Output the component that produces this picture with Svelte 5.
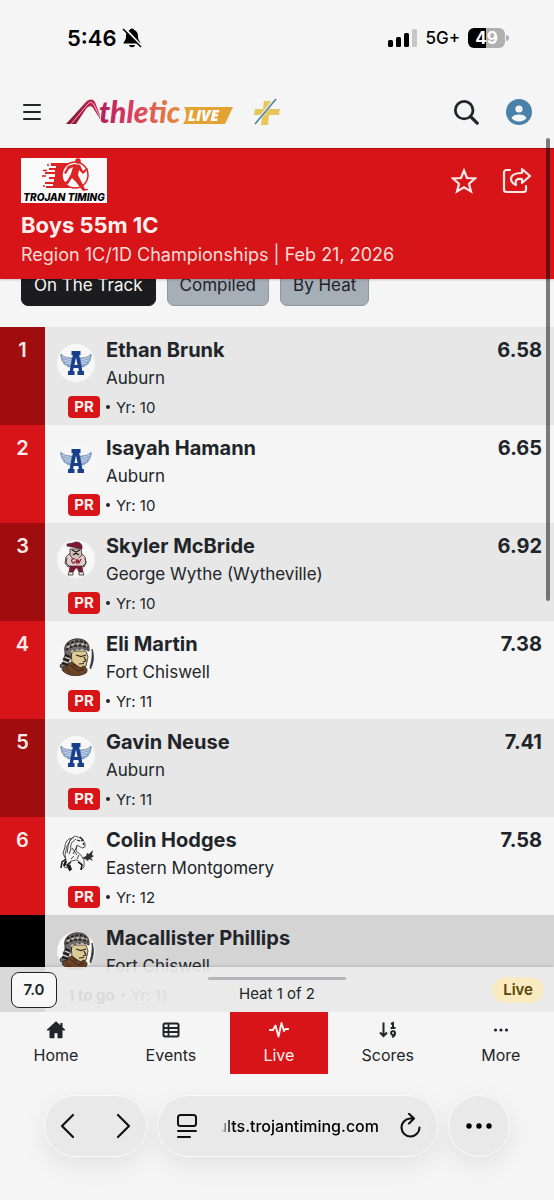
<script lang="ts">
	type School = 'auburn' | 'wythe' | 'chiswell' | 'montgomery';

	interface Result {
		place?: number;
		name: string;
		team: string;
		school: School;
		year: number;
		time?: string;
		note?: string;
	}

	const results: Result[] = [
		{ place: 1, name: 'Ethan Brunk', team: 'Auburn', school: 'auburn', year: 10, time: '6.58' },
		{ place: 2, name: 'Isayah Hamann', team: 'Auburn', school: 'auburn', year: 10, time: '6.65' },
		{ place: 3, name: 'Skyler McBride', team: 'George Wythe (Wytheville)', school: 'wythe', year: 10, time: '6.92' },
		{ place: 4, name: 'Eli Martin', team: 'Fort Chiswell', school: 'chiswell', year: 11, time: '7.38' },
		{ place: 5, name: 'Gavin Neuse', team: 'Auburn', school: 'auburn', year: 11, time: '7.41' },
		{ place: 6, name: 'Colin Hodges', team: 'Eastern Montgomery', school: 'montgomery', year: 12, time: '7.58' },
		{ name: 'Macallister Phillips', team: 'Fort Chiswell', school: 'chiswell', year: 11, note: '1 to go' }
	];

	const tabs = ['On The Track', 'Compiled', 'By Heat'];
	const pages = ['Home', 'Events', 'Live', 'Scores', 'More'];

	let activeTab = $state('On The Track');
	let activePage = $state('Live');
</script>

{#snippet schoolLogo(school: School)}
	<svg class="school" viewBox="0 0 38 38" aria-hidden="true">
		<circle cx="19" cy="19" r="19" fill="#f7f7f7" />
		{#if school === 'auburn'}
			<g fill="#8fa9cc" stroke="#4a6c9f" stroke-width="0.6">
				<path d="M4 10c2 3 6 4 11 4l-1 9c-3 0-4-1-4.500-2-2 0-3-1.500-3-3-1.500-.8-2-2-1.600-3C4 14 3.500 12 4 10z" />
				<path d="M34 10c-2 3-6 4-11 4l1 9c3 0 4-1 4.500-2 2 0 3-1.500 3-3 1.500-.8 2-2 1.600-3 .9-1 1.400-3 .9-5z" />
				<path d="M5 13l9 3M6 16l8 2M8 19l6 1M33 13l-9 3M32 16l-8 2M30 19l-6 1" fill="none" stroke="#e8eef6" />
			</g>
			<path fill="#173f8a" fill-rule="evenodd" d="M14.500 7h9v4h-1.300l3.200 16H27v4h-6.500v-4H22l-.6-3h-4.800L16 27h1.500v4H11v-4h1.600l3.200-16h-1.300zM19 13.500L17.400 21h3.200z" />
		{:else if school === 'wythe'}
			<path d="M12 14l-3 3-1 6 3 4 2-1h11l3 1 2-4-1-6-3-3z" fill="#dccfc9" stroke="#39272a" stroke-width="0.8" />
			<path d="M13 9h11l1 6-4 4h-5l-3-4z" fill="#d8c3bb" stroke="#33252a" stroke-width="0.8" />
			<path d="M10 4l6-1c3-2 8-1 9 3v3l-10-2-5-1z" fill="#7e1830" stroke="#34151d" stroke-width="0.6" />
			<path d="M15 10l4 2 4-2M16 15c2-2 4-2 6 0" fill="none" stroke="#222" stroke-width="1.300" />
			<path d="M14 18h10v8H14z" fill="#ddd1cf" />
			<path d="M18 19c-3-1-4 1-3 3s3 1 3 0v-1m1-2 1 4 1-3 1 3 2-4" fill="none" stroke="#8b1832" stroke-width="1.200" />
			<path d="M13 26h12l1 6h-4l-2-4h-1l-3 4h-4z" fill="#7e1830" stroke="#401520" stroke-width="0.5" />
			<path d="M12 32h4v3h-5zM22 32h4l1 3h-5z" fill="#eee" stroke="#332b2c" stroke-width="0.800" />
			<path d="M10 18l-1 5 3 3M28 18l1 5-3 3" fill="none" stroke="#55383b" />
		{:else if school === 'chiswell'}
			<path d="M14 13h15l2 6-2 9-5 2-9-5z" fill="#dcca96" stroke="#3c2f1f" stroke-width="0.8" />
			<path d="M5 32c2-5 6-7 10-8l8 6 4-2c3 2 4 4 2 7-7 4-18 4-24-3z" fill="#6b4325" stroke="#2f2219" stroke-width="0.8" />
			<path d="M8 14C6 7 12 1 20 .8c8 0 13 4 12 12.200-6-2.500-12-2-17 1l-1 6-3 4-1 4-6 2-1-3 4-3-1-3 2-3z" fill="#6f6c69" stroke="#1f1d1c" stroke-width="0.8" />
			<path d="M9 12c6-5 14-6 22-2M10 7c6-4 13-5 19-2" fill="none" stroke="#262422" stroke-width="2" stroke-dasharray="3 1.500" />
			<path d="M10 9.500c6-4 13-5 20-2M14 14c5-3 11-3 16-1" fill="none" stroke="#c9c6c1" stroke-width="1.500" stroke-dasharray="3 2" />
			<path d="M8 17l5 2M7 21l5 2M5 25l6 2" stroke="#1d1b1a" stroke-width="2" fill="none" />
			<path d="M8 19l5 2M6 23l5 2" stroke="#cfccc6" stroke-width="1.200" fill="none" />
			<path d="M19 17l5 1.500 5-1.500M27 19l2 4-3 1M22 26l5-.5" fill="none" stroke="#33291b" stroke-width="1.200" />
			<path d="M13 27l8 6 6-2M9 30l4 5M16 26l3 3" stroke="#3b2718" fill="none" />
			<path d="M35 11c2.500 7 1.500 14-1.500 20l-.5-2c2-6 2.500-12 2-18z" fill="#343638" stroke="#343638" stroke-width="0.8" />
		{:else}
			<path d="M14 5l4-3 6 2 4 5v4l-3 1-5-3-1 6 5 4 3 5v7l-3 3 1-6-5-4-6 1-4 7-3-1 2-6-1-7 2-8z" fill="#f4f4f4" stroke="#333" stroke-width="0.8" />
			<path d="M14 4c-5 2-6 6-6 9l-2 6 2 5M17 3c-5 3-5 6-6 10l-1 6M19 5c-4 3-6 5-5 10l-2 5M15 14l5 7M20 12l-4 8M17 22l-3 3M22 21l-2 4" fill="none" stroke="#333" stroke-width="0.9" />
			<path d="M20 6l3 1M26 9l1 2M23 3l3 3-2 1" fill="none" stroke="#181818" stroke-width="1.300" />
			<path d="M9 25l-4 3-1 6M14 28l-4 3 3 6M21 28l4 3-1 5" fill="none" stroke="#181818" stroke-width="1.500" />
			<path d="M12 31l2 5M9 27l-2 5" fill="none" stroke="#181818" stroke-width="2.400" />
			<path d="M25 24l4-2 1-3 2 1 4-4-1 5 2 1-3 2 2 3-4-2-1 2-3-2z" fill="#303030" />
		{/if}
	</svg>
{/snippet}

{#snippet navIcon(name: string)}
	<svg class="nav-icon" viewBox="0 0 20 20" aria-hidden="true">
		{#if name === 'Home'}
			<path d="M10 1.200.8 9.800l1.200 1.200 1.500-1.200v7.500c0 .6.400 1 1 1h4v-5h3v5h4c.6 0 1-.4 1-1V9.800L18 11l1.200-1.200-2.700-2.500V3h-2.200v2.200z" fill="currentColor" />
		{:else if name === 'Events'}
			<rect x="2.500" y="3.500" width="15" height="13" rx="1.500" fill="none" stroke="currentColor" stroke-width="2" />
			<path d="M7.500 4v12M3 8h14M3 12h14" fill="none" stroke="currentColor" stroke-width="1.800" />
		{:else if name === 'Live'}
			<path d="M0 10h4l2.500-4.500 3 11L12.500 3l2.500 8 1.500-2H20" fill="none" stroke="currentColor" stroke-width="1.900" stroke-linejoin="round" />
		{:else if name === 'Scores'}
			<path d="M5.500 2.500v13M2 12.500l3.500 3.500L9 12.500M13 4l2-1v5M12.500 8h5M15 11a2 2 0 1 0 .1 0M17 13c0 2-.8 3.500-3 4" fill="none" stroke="currentColor" stroke-width="2" />
		{:else}
			<g fill="currentColor"><circle cx="4.500" cy="10" r="1.600" /><circle cx="10" cy="10" r="1.600" /><circle cx="15.500" cy="10" r="1.600" /></g>
		{/if}
	</svg>
{/snippet}

<div class="screen">
	<div class="status-bar">
		<div class="clock">
			<span>5:46</span>
			<svg width="20" height="22" viewBox="0 0 20 22" aria-hidden="true">
				<path d="M10 1.500c-1.500 0-2 .8-2.200 1.500C5 4 4 6.500 4 9.500c0 4-2.500 5-2.500 7h17c0-2-2.500-3-2.500-7 0-3-1-5.500-3.800-6.500-.2-.7-.7-1.500-2.200-1.500zM7 18c.5 3 5.500 3 6 0z" fill="#000" />
				<path d="M2.500 1l17 18" stroke="#f5f5f5" stroke-width="2" />
				<path d="M1 2l18 18" stroke="#000" stroke-width="1.600" />
			</svg>
		</div>
		<div class="signal">
			<svg width="29" height="20" viewBox="0 0 29 20" aria-hidden="true">
				<rect x="0" y="12" width="5" height="7" rx="1.500" />
				<rect x="8" y="9" width="5" height="10" rx="1.500" />
				<rect x="16" y="5" width="5" height="14" rx="1.500" />
				<rect x="24" y="1" width="5" height="18" rx="1.500" fill="#c7c7c7" />
			</svg>
			<span class="network">5G+</span>
			<span class="battery">49</span>
		</div>
	</div>

	<header class="app-bar">
		<button type="button" class="icon-button" aria-label="Menu">
			<svg width="20" height="20" viewBox="0 0 20 20">
				<path d="M2 3h16M2 10h16M2 17h16" stroke="#212529" stroke-width="2" stroke-linecap="round" />
			</svg>
		</button>
		<a class="brand" href="#home" aria-label="AthleticLIVE">
			<svg width="168" height="34" viewBox="0 0 168 34">
				<defs>
					<linearGradient id="brand-fill" gradientUnits="userSpaceOnUse" x1="34" y1="0" x2="124" y2="0">
						<stop offset="0" stop-color="#b3205c" />
						<stop offset="0.35" stop-color="#d93b62" />
						<stop offset="0.65" stop-color="#df694d" />
						<stop offset="1" stop-color="#e3a238" />
					</linearGradient>
					<linearGradient id="brand-peak">
						<stop offset="0" stop-color="#8a1528" />
						<stop offset="1" stop-color="#c32a62" />
					</linearGradient>
				</defs>
				<path d="M0 29 19 8c3-4 8-5 10-1l5 13v4l-7-11c-2-3-5-2-7 1L10 29z" fill="url(#brand-peak)" />
				<path d="M5 29 21 10c3-4 5-3 7 0l6 12" fill="none" stroke="#f7d9df" stroke-width="0.800" />
				<path d="M118 12h49l-8 17h-42c4-5 4-12 1-17z" fill="#e2a332" />
				<text x="33" y="28" class="brand-name" fill="url(#brand-fill)">thletic</text>
				<text x="122" y="26" class="brand-live">LIVE</text>
			</svg>
		</a>
		<svg class="plus" width="26" height="28" viewBox="0 0 26 28" aria-hidden="true">
			<path d="M10 3h7l-1 8h10l-1 6H15l-1 10H7l1-10H0l1-6h8z" fill="#e9c55c" />
			<path d="M22 0 1 26" stroke="#f5f5f5" stroke-width="3" />
			<path d="M22 1 1 26" stroke="#4c86a3" stroke-width="1.700" />
		</svg>
		<div class="app-actions">
			<button type="button" class="icon-button" aria-label="Search">
				<svg width="26" height="26" viewBox="0 0 28 28">
					<circle cx="12" cy="12" r="9.500" fill="none" stroke="#212529" stroke-width="3" />
					<path d="M19 19l7 7" stroke="#212529" stroke-width="3.500" stroke-linecap="round" />
				</svg>
			</button>
			<button type="button" class="icon-button" aria-label="Account">
				<svg width="26" height="26" viewBox="0 0 26 26">
					<circle cx="13" cy="13" r="13" fill="#4981ab" />
					<circle cx="13" cy="10" r="3.600" fill="#f5f5f5" />
					<path d="M5.500 19c1-2.500 4-3.500 7.500-3.500s6.500 1 7.500 3.500c-3 4.500-12 4.500-15 0z" fill="#f5f5f5" />
				</svg>
			</button>
		</div>
	</header>

	<section class="meet">
		<div class="meet-top">
			<svg width="86" height="45" viewBox="0 0 86 45" role="img" aria-label="Trojan Timing">
				<rect width="86" height="45" fill="#fafafa" />
				<path d="M30 5h20l-6 5-2 7 3 8 5 5H25v-2h7v-2h-8v-2h9v-3h-5v-2h6v-3H24v-2h10v-2h-6v-2h7V8h-5z" fill="#dc2427" />
				<path d="M22 12.500h4M21 18h4M26 7h2M22 28h2" stroke="#dc2427" stroke-width="1.500" />
				<circle cx="54" cy="17" r="13" fill="#fafafa" stroke="#dc2427" stroke-width="1.500" />
				<circle cx="57" cy="3" r="2.800" fill="#dc2427" />
				<path d="M53 6l6 1 3 6 4-3 1 1-5 5-4-4-1 5 3 6 4 8h3v1l-5 1-7-9-4-4-4 6-6 1v-2l5-2 4-7 2-7-4 2-3 5-2-1 4-7z" fill="#dc2427" />
				<text x="43" y="43" class="timing-name" text-anchor="middle">TROJAN TIMING</text>
			</svg>
			<div class="meet-actions">
				<button type="button" class="icon-button" aria-label="Favorite">
					<svg width="26" height="26" viewBox="0 0 26 26">
						<path d="M13 2.500l3 7.500 8 .5-6 5.300 2 7.700-7-4.200-7 4.200 2-7.700L2 10.500l8-.5z" fill="none" stroke="#fde8e8" stroke-width="2.200" stroke-linejoin="miter" />
					</svg>
				</button>
				<button type="button" class="icon-button" aria-label="Share">
					<svg width="30" height="28" viewBox="0 0 30 28" fill="none" stroke="#fde8e8" stroke-width="2.200" stroke-linejoin="round" stroke-linecap="round">
						<path d="M8 3H4.500C3 3 2 4 2 5.500v17C2 24 3 25 4.500 25h17c1.500 0 2.500-1 2.500-2.500V19" />
						<path d="M20 2l8 7-8 7v-4c-6-.5-7 1-6 6-4-2-5-4-5-6 0-4 4-6 11-6z" />
					</svg>
				</button>
			</div>
		</div>
		<h1>Boys 55m 1C</h1>
		<p>Region 1C/1D Championships | Feb 21, 2026</p>
	</section>

	<main>
		<div class="tabs">
			{#each tabs as tab}
				<button type="button" class="tab" class:active={tab === activeTab} onclick={() => (activeTab = tab)}>{tab}</button>
			{/each}
		</div>

		<ol class="results">
			{#each results as result}
				<li class="result" class:pending={!result.place}>
					<span class="place">{result.place ?? ''}</span>
					<div class="entry">
						<div class="athlete">
							{@render schoolLogo(result.school)}
							<div class="names">
								<strong class="name">{result.name}</strong>
								<span class="team">{result.team}</span>
							</div>
							{#if result.time}
								<span class="time">{result.time}</span>
							{/if}
						</div>
						<div class="meta">
							{#if result.note}
								<b class="note">{result.note}</b>
							{:else}
								<span class="pr">PR</span>
							{/if}
							<span class="dot"></span>
							<span>Yr: {result.year}</span>
						</div>
					</div>
				</li>
			{/each}
		</ol>
	</main>

	<div class="live-bar">
		<button type="button" class="timer">7.0</button>
		<div class="heat">
			<span class="handle"></span>
			<span>Heat 1 of 2</span>
		</div>
		<span class="live-badge">Live</span>
	</div>

	<nav class="bottom-nav">
		{#each pages as page}
			<a href="#{page.toLowerCase()}" class:active={page === activePage} onclick={() => (activePage = page)}>
				{@render navIcon(page)}
				<span>{page}</span>
			</a>
		{/each}
	</nav>

	<footer class="browser-bar">
		<div class="pill history">
			<button type="button" class="icon-button" aria-label="Back">
				<svg width="16" height="26" viewBox="0 0 16 26"><path d="M13 2 2 13l11 11" fill="none" stroke="#111" stroke-width="2.200" stroke-linecap="round" stroke-linejoin="round" /></svg>
			</button>
			<button type="button" class="icon-button" aria-label="Forward">
				<svg width="16" height="26" viewBox="0 0 16 26"><path d="M3 2l11 11L3 24" fill="none" stroke="#111" stroke-width="2.200" stroke-linecap="round" stroke-linejoin="round" /></svg>
			</button>
		</div>
		<div class="pill address">
			<button type="button" class="icon-button" aria-label="Page menu">
				<svg width="22" height="26" viewBox="0 0 22 26" fill="none" stroke="#111" stroke-width="2" stroke-linecap="round">
					<rect x="2" y="2" width="18" height="11" rx="2.500" /><path d="M2 18h18M2 24h12" />
				</svg>
			</button>
			<button type="button" class="url">ults.trojantiming.com</button>
			<button type="button" class="icon-button" aria-label="Reload">
				<svg width="22" height="26" viewBox="0 0 22 26" fill="none" stroke="#111" stroke-width="2.100" stroke-linecap="round" stroke-linejoin="round">
					<path d="M14 5.500H11a9 9 0 1 0 9.500 9M10 .8l5 4.700-5 5" />
				</svg>
			</button>
		</div>
		<button type="button" class="pill more" aria-label="More options">
			<svg width="26" height="6" viewBox="0 0 26 6"><circle cx="3" cy="3" r="2.700" /><circle cx="13" cy="3" r="2.700" /><circle cx="23" cy="3" r="2.700" /></svg>
		</button>
	</footer>

	<span class="scroll-thumb"></span>
</div>

<style>
	:global(body) {
		margin: 0;
		background: #f5f5f5;
	}

	.screen {
		position: relative;
		font-family: Inter, 'Liberation Sans', sans-serif;
		color: #212529;
		background: #f5f5f5;
	}

	svg {
		display: block;
		flex: none;
	}

	button {
		font: inherit;
		color: inherit;
		cursor: pointer;
	}

	.icon-button {
		padding: 0;
		border: 0;
		background: none;
	}

	.status-bar {
		display: flex;
		justify-content: space-between;
		align-items: center;
		height: 76px;
		padding: 0 49px 0 67px;
		color: #000;
	}

	.clock,
	.signal {
		display: flex;
		align-items: center;
	}

	.clock {
		gap: 5px;
		font-size: 22px;
		font-weight: 600;
	}

	.signal {
		gap: 8px;
	}

	.network {
		font-size: 17px;
		font-weight: 500;
	}

	.battery {
		position: relative;
		width: 37px;
		border-radius: 6px;
		background: linear-gradient(90deg, #000 50%, #b0b0b0 50%);
		color: #fff;
		font-size: 17px;
		font-weight: 700;
		line-height: 20px;
		text-align: center;
	}

	.battery::after {
		content: '';
		position: absolute;
		top: 7px;
		right: -4px;
		width: 3px;
		height: 6px;
		border-radius: 0 3px 3px 0;
		background: #b0b0b0;
	}

	.app-bar {
		display: flex;
		align-items: center;
		height: 72px;
		padding: 0 22px;
	}

	.brand {
		margin-left: 24px;
	}

	.brand-name {
		font-family: Lato, sans-serif;
		font-size: 30px;
		font-style: italic;
		font-weight: 900;
	}

	.brand-live {
		font-family: 'Open Sans', sans-serif;
		font-size: 15px;
		font-style: italic;
		font-weight: 800;
		fill: #fff;
	}

	.plus {
		margin-left: 20px;
	}

	.app-actions {
		display: flex;
		align-items: center;
		gap: 27px;
		margin-left: auto;
	}

	.meet {
		position: relative;
		z-index: 1;
		padding: 9px 22px 10px 21px;
		border-top: 1px solid #ac1013;
		background: #d71518;
		color: #fff0ee;
		box-shadow: 0 1px 2px rgba(0, 0, 0, 0.2);
	}

	.meet-top,
	.meet-actions {
		display: flex;
		justify-content: space-between;
		align-items: center;
	}

	.meet-actions {
		gap: 25px;
	}

	.timing-name {
		font-size: 10px;
		font-style: italic;
		font-weight: 800;
	}

	h1 {
		margin: 7px 0 0;
		font-size: 22px;
		font-weight: 700;
		line-height: 30px;
	}

	.meet p {
		margin: 0;
		color: #fbdcd9;
		font-size: 18px;
		line-height: 29px;
	}

	.tabs {
		display: flex;
		gap: 11px;
		margin-top: -15px;
		padding: 0 21px 21px;
	}

	.tab {
		height: 42px;
		padding: 0 12px;
		border: 1px solid #8f979f;
		border-radius: 7px;
		background: #a6aeb8;
		font-size: 17px;
	}

	.tab.active {
		border-color: #1c1c1e;
		background: #1c1c1e;
		color: #f8f8f8;
	}

	.results {
		margin: 0;
		padding: 0;
		list-style: none;
	}

	.result {
		display: flex;
		background: #f5f5f5;
	}

	.result:nth-child(odd) {
		background: #e7e7e7;
	}

	.place {
		flex: none;
		width: 45px;
		padding-top: 9px;
		box-sizing: border-box;
		background: #d71518;
		color: #fdeaea;
		font-size: 20px;
		font-weight: 600;
		line-height: 28px;
		text-align: center;
	}

	.result:nth-child(odd) .place {
		background: #a00d0f;
	}

	.result.pending,
	.result.pending:nth-child(odd) {
		background: #d4d4d4;
	}

	.result.pending .place,
	.result.pending:nth-child(odd) .place {
		background: #000;
	}

	.entry {
		flex: 1;
		padding: 9px 12px 3px;
	}

	.athlete {
		display: flex;
		gap: 11px;
	}

	.school {
		width: 38px;
		height: 38px;
		margin-top: 8px;
	}

	.names {
		display: flex;
		flex: 1;
		flex-direction: column;
		line-height: 28px;
	}

	.name,
	.time {
		font-size: 20px;
		font-weight: 700;
		line-height: 28px;
	}

	.team {
		font-size: 17px;
	}

	.meta {
		display: flex;
		align-items: center;
		gap: 6px;
		height: 30px;
		padding: 0 11px;
		font-size: 15px;
	}

	.note {
		color: #000;
	}

	.pr {
		width: 32px;
		border-radius: 4px;
		background: #d71518;
		color: #fff0ee;
		font-weight: 700;
		line-height: 22px;
		text-align: center;
	}

	.dot {
		width: 4px;
		height: 4px;
		border-radius: 50%;
		background: currentColor;
	}

	.live-bar {
		position: relative;
		display: grid;
		grid-template-columns: 1fr auto 1fr;
		align-items: center;
		height: 45px;
		margin-top: -46px;
		padding: 0 11px;
		background: rgba(236, 236, 236, 0.92);
		box-shadow: 0 0 4px rgba(0, 0, 0, 0.2);
		font-size: 15px;
	}

	.timer {
		justify-self: start;
		width: 46px;
		height: 36px;
		padding: 0;
		border: 1px solid #222;
		border-radius: 8px;
		background: #f8f8f8;
		font-weight: 600;
	}

	.heat {
		display: flex;
		flex-direction: column;
		align-items: center;
		gap: 4px;
	}

	.handle {
		width: 138px;
		height: 3px;
		border-radius: 2px;
		background: #b5b5b8;
	}

	.live-badge {
		justify-self: end;
		padding: 0 10px;
		border-radius: 13px;
		background: #f9ebbd;
		box-shadow: 0 0 3px #f9ebbd;
		color: #55430b;
		font-weight: 600;
		line-height: 24px;
	}

	.bottom-nav {
		position: relative;
		display: flex;
		background: #f5f5f5;
	}

	.bottom-nav a {
		display: flex;
		flex: 1 1 auto;
		flex-direction: column;
		align-items: center;
		gap: 3px;
		padding: 8px 0 7px;
		color: #212529;
		font-size: 16px;
		line-height: 24px;
		text-decoration: none;
	}

	.bottom-nav a.active {
		background: #d71518;
		color: #fff0ee;
	}

	.nav-icon {
		width: 20px;
		height: 20px;
	}

	.browser-bar {
		display: flex;
		gap: 10px;
		padding: 21px 44px 43px;
	}

	.pill {
		display: flex;
		align-items: center;
		box-sizing: border-box;
		height: 62px;
		border: 1px solid #fbfbfb;
		border-radius: 31px;
		background: #e9e9e9;
		box-shadow: 0 8px 26px rgba(0, 0, 0, 0.08);
	}

	.history {
		justify-content: space-between;
		width: 103px;
		padding: 0 15px;
	}

	.address {
		flex: 1;
		justify-content: space-between;
		padding: 0 16px 0 18px;
	}

	.url {
		margin-left: auto;
		padding: 0 20px 0 0;
		border: 0;
		background: none;
		color: #000;
		font-size: 16px;
		font-weight: 500;
		line-height: 24px;
		mask-image: linear-gradient(90deg, transparent 4px, #000 14px);
	}

	.more {
		justify-content: center;
		width: 62px;
		padding: 0;
	}

	.scroll-thumb {
		position: absolute;
		top: 138px;
		right: 4px;
		z-index: 2;
		width: 4px;
		height: 463px;
		border-radius: 2px;
		background: rgba(0, 0, 0, 0.5);
	}
</style>
